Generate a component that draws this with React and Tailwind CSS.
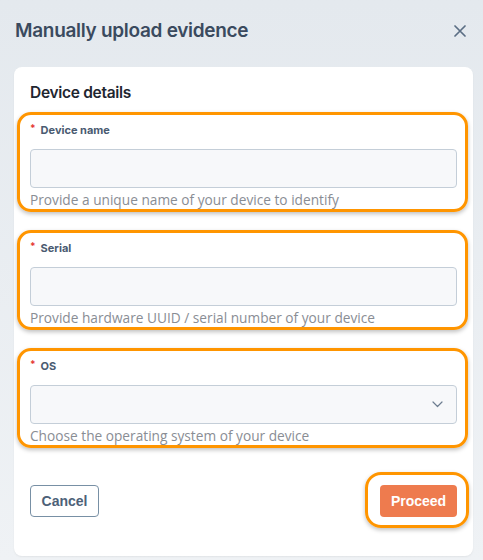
import React from "react";

function Field({ label, help, select }) {
  return (
    <div className="relative">
      <div className="pointer-events-none absolute -top-[9px] -bottom-[2px] -left-[13px] -right-[11px] rounded-[14px] border-[3px] border-[#ff9500] shadow-[0_2px_4px_rgba(0,0,0,0.25)]" />
      <div className="flex h-[18px] items-center font-['Inter',sans-serif] text-[11px] font-bold text-[#4a5b71]">
        <span className="mr-[5px] -mt-[3px] text-[10px] text-[#e53935]">*</span>
        {label}
      </div>
      <div className="mt-[10px] flex h-[39px] items-center justify-end rounded-[4px] border border-[#c4ced8] bg-[#f7f8fa] pr-[13px]">
        {select && (
          <svg width="11" height="7" viewBox="0 0 11 7" fill="none">
            <path d="M1 1l4.5 4.5L10 1" stroke="#6d7d90" strokeWidth="1.2" strokeLinecap="round" strokeLinejoin="round" />
          </svg>
        )}
      </div>
      <div className="mt-[2px] h-[20px] whitespace-nowrap font-['Open_Sans',sans-serif] text-[13.7px] leading-[20px] text-[#898d94]">
        {help}
      </div>
    </div>
  );
}

export default function App() {
  return (
    <div className="h-[560px] w-[483px] bg-gradient-to-b from-[#e4e9ee] to-[#eff2f5] pl-[14px] pr-[10px]">
      <div className="flex h-[63px] items-center justify-between pb-[1px] pl-[1px] pr-[7px]">
        <h1 className="font-['Inter',sans-serif] text-[19px] font-semibold tracking-[-0.3px] text-[#3a4a5e]">
          Manually upload evidence
        </h1>
        <svg width="12" height="12" viewBox="0 0 12 12" fill="none">
          <path d="M1 1l10 10M11 1L1 11" stroke="#5b6e84" strokeWidth="1.7" strokeLinecap="round" />
        </svg>
      </div>
      <div className="mt-[4px] rounded-[8px] bg-white px-[16px] pb-[39px] pt-[14px] shadow-[0_1px_2px_rgba(0,0,0,0.06)]">
        <div className="h-[24px] font-['Inter',sans-serif] text-[15.5px] font-semibold leading-[24px] tracking-[-0.3px] text-[#1f2630]">
          Device details
        </div>
        <div className="mt-[16px] flex flex-col gap-[29px]">
          <Field label="Device name" help="Provide a unique name of your device to identify" />
          <Field label="Serial" help="Provide hardware UUID / serial number of your device" />
          <Field label="OS" help="Choose the operating system of your device" select />
        </div>
        <div className="mt-[39px] flex items-center justify-between">
          <button className="h-[32px] w-[69px] rounded-[4px] border border-[#7890a5] bg-white font-['Liberation_Sans',Arial,sans-serif] text-[14px] font-bold text-[#4d6178]">
            Cancel
          </button>
          <div className="relative">
            <div className="pointer-events-none absolute -top-[13px] -bottom-[11px] -left-[15px] -right-[12px] rounded-[16px] border-[3px] border-[#ff9500] shadow-[0_2px_4px_rgba(0,0,0,0.25)]" />
            <button className="h-[32px] w-[77px] rounded-[4px] bg-[#ee7b4e] font-['Liberation_Sans',Arial,sans-serif] text-[14px] font-bold text-white">
              Proceed
            </button>
          </div>
        </div>
      </div>
    </div>
  );
}
